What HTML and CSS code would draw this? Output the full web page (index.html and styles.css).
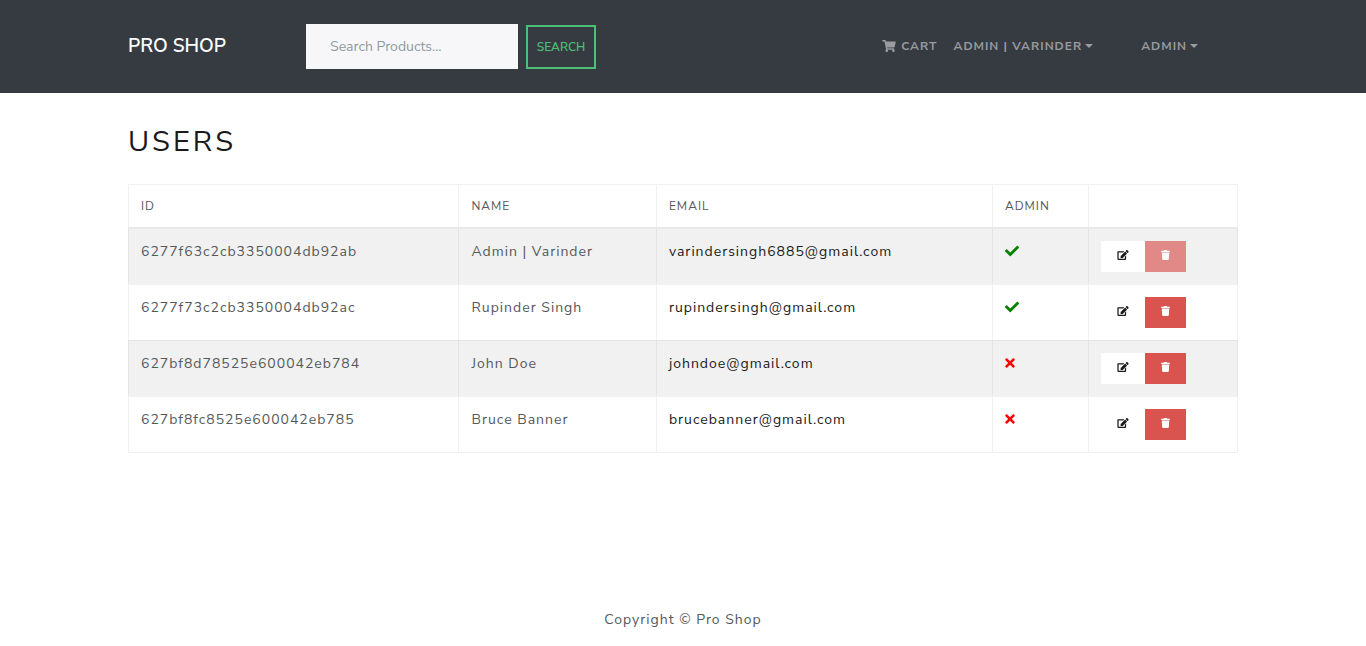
FILE: index.html
```html
<!DOCTYPE html>
<html lang="en">
<head>
<meta charset="utf-8">
<meta name="viewport" content="width=device-width, initial-scale=1">
<title>Pro Shop</title>
<link rel="stylesheet" href="styles.css">
</head>
<body>
<svg class="sprite" aria-hidden="true">
  <symbol id="cart" viewBox="0 0 576 512"><path d="M528.12 301.319l47.273-208C578.806 78.301 567.391 64 551.99 64H159.208l-9.166-44.81C147.758 8.021 137.93 0 126.529 0H24C10.745 0 0 10.745 0 24v16c0 13.255 10.745 24 24 24h69.883l70.248 343.435C147.325 417.1 136 435.222 136 456c0 30.928 25.072 56 56 56s56-25.072 56-56c0-15.674-6.447-29.835-16.824-40h209.647C430.447 426.165 424 440.326 424 456c0 30.928 25.072 56 56 56s56-25.072 56-56c0-22.172-12.888-41.332-31.579-50.405l5.517-24.276c3.413-15.018-8.002-29.319-23.403-29.319H218.117l-6.545-32h293.145c11.206 0 20.92-7.754 23.403-18.681z"/></symbol>
  <symbol id="check" viewBox="0 0 512 512"><path d="M173.898 439.404l-166.4-166.4c-9.997-9.997-9.997-26.206 0-36.204l36.203-36.204c9.997-9.998 26.207-9.998 36.204 0L192 312.69 432.095 72.596c9.997-9.997 26.207-9.997 36.204 0l36.203 36.204c9.997 9.997 9.997 26.206 0 36.204l-294.4 294.401c-9.998 9.997-26.207 9.997-36.204-.001z"/></symbol>
  <symbol id="times" viewBox="0 0 352 512"><path d="M242.72 256l100.07-100.07c12.28-12.28 12.28-32.19 0-44.48l-22.24-22.24c-12.28-12.28-32.19-12.28-44.48 0L176 189.28 75.93 89.21c-12.28-12.28-32.19-12.28-44.48 0L9.21 111.45c-12.28 12.28-12.28 32.19 0 44.48L109.28 256 9.21 356.07c-12.28 12.28-12.28 32.19 0 44.48l22.24 22.24c12.28 12.28 32.2 12.28 44.48 0L176 322.72l100.07 100.07c12.28 12.28 32.2 12.28 44.48 0l22.24-22.24c12.28-12.28 12.28-32.19 0-44.48L242.72 256z"/></symbol>
  <symbol id="edit" viewBox="0 0 576 512"><path d="M402.6 83.2l90.2 90.2c3.8 3.8 3.8 10 0 13.8L274.4 405.6l-92.8 10.3c-12.4 1.4-22.9-9.1-21.5-21.5l10.3-92.8L388.8 83.2c3.8-3.8 10-3.8 13.8 0zm162-22.9l-48.8-48.8c-15.2-15.2-39.9-15.2-55.2 0l-35.4 35.4c-3.8 3.8-3.8 10 0 13.8l90.2 90.2c3.8 3.8 10 3.8 13.8 0l35.4-35.4c15.2-15.3 15.2-40 0-55.2zM384 346.2V448H64V128h229.8c3.2 0 6.2-1.3 8.5-3.5l40-40c7.6-7.6 2.2-20.5-8.5-20.5H48C21.5 64 0 85.5 0 112v352c0 26.5 21.5 48 48 48h352c26.500 0 48-21.500 48-48V306.200c0-10.700-12.900-16-20.500-8.500l-40 40c-2.200 2.300-3.500 5.300-3.500 8.500z"/></symbol>
  <symbol id="trash" viewBox="0 0 448 512"><path d="M432 32H312l-9.400-18.700A24 24 0 0 0 281.100 0H166.800a23.720 23.720 0 0 0-21.400 13.300L136 32H16A16 16 0 0 0 0 48v32a16 16 0 0 0 16 16h416a16 16 0 0 0 16-16V48a16 16 0 0 0-16-16zM53.200 467a48 48 0 0 0 47.900 45h245.800a48 48 0 0 0 47.900-45L416 128H32z"/></symbol>
</svg>
<header class="navbar">
  <div class="container navbar-inner">
    <a class="brand" href="#">PRO SHOP</a>
    <form class="search">
      <input class="search-input" type="text" placeholder="Search Products..." aria-label="Search products">
      <button class="search-button" type="submit">SEARCH</button>
    </form>
    <nav class="nav">
      <a class="nav-link" href="#"><svg class="cart-icon" aria-hidden="true"><use href="#cart"/></svg>CART</a>
      <a class="nav-link dropdown" href="#">ADMIN | VARINDER</a>
      <a class="nav-link dropdown nav-admin" href="#">ADMIN</a>
    </nav>
  </div>
</header>
<main class="container main">
  <h1 class="title">USERS</h1>
  <table class="users">
    <colgroup><col class="col-id"><col class="col-name"><col class="col-email"><col class="col-admin"><col class="col-actions"></colgroup>
    <thead>
      <tr><th>ID</th><th>NAME</th><th>EMAIL</th><th>ADMIN</th><th></th></tr>
    </thead>
    <tbody>
      <tr>
        <td>6277f63c2cb3350004db92ab</td><td>Admin | Varinder</td>
        <td><a class="email" href="mailto:varindersingh6885@gmail.com">varindersingh6885@gmail.com</a></td>
        <td><svg class="check" role="img" aria-label="Yes"><use href="#check"/></svg></td>
        <td><div class="actions"><button class="btn btn-light" aria-label="Edit"><svg class="edit-icon"><use href="#edit"/></svg></button><button class="btn btn-danger" aria-label="Delete" disabled><svg class="trash-icon"><use href="#trash"/></svg></button></div></td>
      </tr>
      <tr>
        <td>6277f73c2cb3350004db92ac</td><td>Rupinder Singh</td>
        <td><a class="email" href="mailto:rupindersingh@gmail.com">rupindersingh@gmail.com</a></td>
        <td><svg class="check" role="img" aria-label="Yes"><use href="#check"/></svg></td>
        <td><div class="actions"><button class="btn btn-light" aria-label="Edit"><svg class="edit-icon"><use href="#edit"/></svg></button><button class="btn btn-danger" aria-label="Delete"><svg class="trash-icon"><use href="#trash"/></svg></button></div></td>
      </tr>
      <tr>
        <td>627bf8d78525e600042eb784</td><td>John Doe</td>
        <td><a class="email" href="mailto:johndoe@gmail.com">johndoe@gmail.com</a></td>
        <td><svg class="times" role="img" aria-label="No"><use href="#times"/></svg></td>
        <td><div class="actions"><button class="btn btn-light" aria-label="Edit"><svg class="edit-icon"><use href="#edit"/></svg></button><button class="btn btn-danger" aria-label="Delete"><svg class="trash-icon"><use href="#trash"/></svg></button></div></td>
      </tr>
      <tr>
        <td>627bf8fc8525e600042eb785</td><td>Bruce Banner</td>
        <td><a class="email" href="mailto:brucebanner@gmail.com">brucebanner@gmail.com</a></td>
        <td><svg class="times" role="img" aria-label="No"><use href="#times"/></svg></td>
        <td><div class="actions"><button class="btn btn-light" aria-label="Edit"><svg class="edit-icon"><use href="#edit"/></svg></button><button class="btn btn-danger" aria-label="Delete"><svg class="trash-icon"><use href="#trash"/></svg></button></div></td>
      </tr>
    </tbody>
  </table>
</main>
<footer class="footer">Copyright © Pro Shop</footer>
</body>
</html>
```
FILE: styles.css
```css
* { box-sizing: border-box; }

body {
  display: flex;
  flex-direction: column;
  min-height: 100vh;
  margin: 0;
  background: #fff;
  color: #55595c;
  font-family: "Nunito Sans", Nunito, Lato, "Open Sans", sans-serif;
  font-size: 14px;
  line-height: 21px;
  letter-spacing: 1px;
}

.sprite { display: none; }
svg { fill: currentColor; }
a { color: inherit; text-decoration: none; }

.container {
  width: 100%;
  max-width: 1140px;
  margin: 0 auto;
  padding: 0 15px;
}

/* Navigation */
.navbar { padding: 24px 0; background: #363a41; }
.navbar-inner { display: flex; align-items: center; }
.brand {
  margin-right: 80px;
  color: #fff;
  font-size: 19px;
  font-weight: 600;
  letter-spacing: 0;
}
.search { display: flex; align-items: flex-end; gap: 8px; }
.search-input {
  width: 212px;
  height: 45px;
  padding: 0 24px;
  border: 0;
  border-radius: 0;
  background: #f7f7f9;
  color: #55595c;
  font: inherit;
}
.search-input::placeholder { color: #919aa1; opacity: 1; }
.search-button {
  width: 70px;
  height: 44px;
  padding: 0;
  border: 2px solid #4bbf73;
  background: transparent;
  color: #4bbf73;
  font-family: inherit;
  font-size: 12px;
  font-weight: 600;
}
.nav { display: flex; margin-left: auto; margin-right: 32px; }
.nav-link {
  display: flex;
  align-items: center;
  padding: 0 8px;
  color: #999b9e;
  font-size: 12px;
  font-weight: 700;
}
.nav-admin { margin-left: 32px; }
.cart-icon { width: 14px; height: 12px; margin: 0 5px 2px 0; }
.dropdown::after {
  content: "";
  margin-left: 3px;
  margin-bottom: 2px;
  border: 4px solid transparent;
  border-top-color: currentColor;
  border-bottom: 0;
}

/* Users table */
.main { flex: 1; padding-top: 28px; }
.title {
  margin: 0 0 22px;
  color: #1a1a1a;
  font-size: 29px;
  font-weight: 400;
  line-height: 41px;
  letter-spacing: 3px;
}
.users { width: 100%; table-layout: fixed; border-collapse: collapse; }
.col-id { width: 29.8%; }
.col-name { width: 17.8%; }
.col-email { width: 30.3%; }
.col-admin { width: 8.7%; }
.col-actions { width: 13.4%; }
.users th, .users td {
  padding: 12px;
  border: 1px solid #f0f0f0;
  text-align: left;
  vertical-align: top;
}
.users th {
  border-bottom: 2px solid #e8e8e8;
  font-size: 12px;
  font-weight: 400;
  line-height: 18px;
}
.users tbody tr:nth-child(odd) { background: #f1f1f1; }
.users tbody tr:nth-child(odd) td {
  border-left-color: #e4e4e4;
  border-right-color: #e4e4e4;
}
.users tbody tr:nth-child(even):not(:last-child) td { border-bottom-color: #e4e4e4; }
.email { color: #1a1a1a; }
.check, .times { display: block; height: 14px; margin-top: 3px; }
.check { width: 14px; color: #008000; }
.times { width: 10px; color: #f00; }
.actions { display: flex; }
.btn {
  display: flex;
  align-items: center;
  height: 31px;
  padding: 0 16px 3px;
  border: 0;
}
.btn-light { background: #fff; color: #1a1a1a; }
.btn-danger { background: #d9534f; color: #fff; }
.btn-danger:disabled { opacity: 0.65; }
.edit-icon { width: 12px; height: 10px; }
.trash-icon { width: 9px; height: 10px; }

.footer { padding: 16px; text-align: center; }
```
